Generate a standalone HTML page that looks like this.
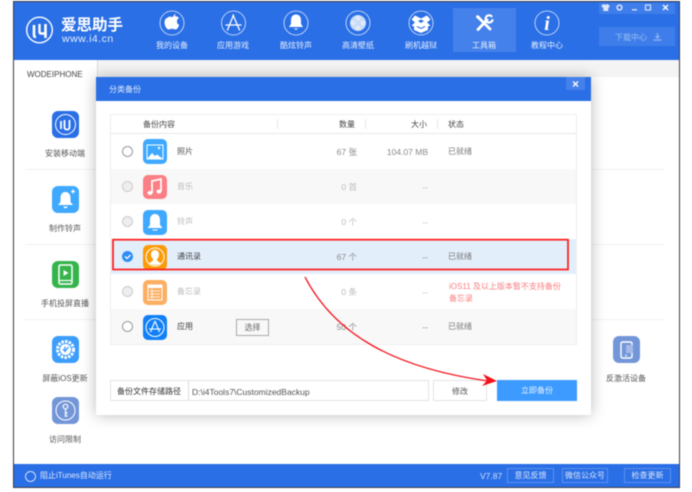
<!DOCTYPE html>
<html><head><meta charset="utf-8">
<style>
html,body{margin:0;padding:0;background:#fff}
body{width:692px;height:492px;overflow:hidden;position:relative;font-family:"Liberation Sans","Noto Sans CJK SC",sans-serif;filter:blur(.4px)}
.a{position:absolute;white-space:nowrap}
.t{position:absolute;white-space:nowrap;line-height:12px}
.c{text-align:center}
svg{position:absolute;overflow:visible}
</style></head><body>
<!-- window -->
<div class="a" style="left:13px;top:1px;width:665px;height:485px;background:#fff;border:1px solid #3c3c44"></div>
<div class="a" style="left:14px;top:2px;width:665px;height:58px;background:#2a6fe6"></div>
<div class="a" style="left:97px;top:60px;width:582px;height:17px;background:#f4f4f4"></div>
<div class="a" style="left:97px;top:60px;width:1px;height:20px;background:#ddd"></div>
<!-- logo -->
<svg style="left:0;top:0" width="692" height="60" viewBox="0 0 692 60" fill="none" stroke="#fff">
<circle cx="39.500" cy="30" r="12.800" stroke-width="1.400"/>
<path d="M34 25v10q0 2 2 2" stroke-width="2.600"/>
<path d="M39.500 24v8q0 1.500 1.500 1.500h5" stroke-width="2.400"/>
<path d="M45.500 24v14" stroke-width="2.600"/>
<g stroke-width=".8" opacity=".85">
<circle cx="172" cy="23" r="12"/><circle cx="233.500" cy="23" r="12"/><circle cx="296" cy="23" r="12"/><circle cx="358" cy="23" r="12"/><circle cx="421" cy="23" r="12"/><circle cx="484" cy="23" r="12"/><circle cx="547" cy="23" r="12"/>
</g>
</svg>
<div class="t" style="left:61px;top:17px;font-size:15.500px;line-height:17px;color:#fff;font-weight:bold">爱思助手</div>
<div class="t" style="left:62px;top:33px;font-size:10.500px;color:#e4eeff;letter-spacing:.5px">www.i4.cn</div>
<div class="a" style="left:453px;top:8px;width:63px;height:44px;background:#4581ea"></div>
<!-- nav icons -->
<svg style="left:0;top:0" width="692" height="60" viewBox="0 0 692 60">
<path d="M172 19q2-.6 3-.3-1.500-3 1-4-2.500.3-3.400 3-.3.8-.6 1.300zM168 18.500c-2.500 0-4 2.300-4 5 0 3.500 2.500 7 4 7 1 0 2-.7 3.500-.7s2.500.7 3.500.7c1.500 0 3-2.500 3.700-4.500-3-1.500-3-5.500-.2-7-1-1.400-2.500-1.800-3.700-1.800-1.300 0-2.500.8-3.300.8s-2-.5-3.500-.5z" fill="#fff" transform="translate(.5 -1)"/>
<g stroke="#fff" stroke-width="1.300" fill="none" stroke-linecap="round"><path d="M233.500 15l-6 15M233 15l6.500 15M226 25h15"/></g>
<path d="M296 14.500c-3.500 0-5 2.700-5 5.500v4l-2 3h14l-2-3v-4c0-2.800-1.500-5.500-5-5.500zM294 28.500a2.200 2 0 0 0 4 0z" fill="#fff"/>
<g fill="#fff" opacity=".75"><circle cx="358" cy="23" r="8"/></g>
<g fill="#dfe9fb"><circle cx="358" cy="18" r="2.500"/><circle cx="358" cy="28" r="2.500"/><circle cx="353" cy="23" r="2.500"/><circle cx="363" cy="23" r="2.500"/></g>
<path d="M415 15.500l6 3 6-3 3.500 4-3.500 3 3.500 3-2.500 1v3.500l-7 3-7-3v-3.500l-2.500-1 3.500-3-3.500-3z" fill="#fff"/><path d="M418 21l3-1.500 3 1.500-3 2z" fill="#2a6fe6"/><path d="M417 26.500l4 2 4-2" stroke="#2a6fe6" fill="none"/>
<!-- tools: screwdriver + wrench -->
<g fill="none" stroke="#fff" stroke-linecap="round">
<path d="M478.500 17.500l11.500 11.500" stroke-width="2.800"/>
<path d="M478 29.500l9-9.500" stroke-width="2.800"/>
<path d="M491.500 16.200a3.600 3.600 0 1 0 1 4" stroke-width="2.200"/>
</g>
<path d="M476.500 15l3 1 .5 2.500-1.500 1-2.500-2z" fill="#fff"/>
<text x="547" y="30" font-family="Liberation Serif" font-style="italic" font-weight="bold" font-size="20" fill="#fff" text-anchor="middle">i</text>
<!-- controls -->
<rect x="599" y="3" width="76" height="11" fill="#3f7eea"/>
<rect x="599" y="27" width="76" height="19" fill="#3f7eea"/>
<path d="M602 5l2-1 1 .8h1l1-.8 2 1 .8 2-1.500 .5V11h-5V7.500L601.500 7z" fill="#dce7fb"/>
<circle cx="619.500" cy="7.500" r="2.400" fill="none" stroke="#dce7fb" stroke-width="1.500"/>
<path d="M632 9.800h5" stroke="#dce7fb" stroke-width="1.300"/>
<rect x="645.500" y="5" width="5" height="5" fill="none" stroke="#dce7fb" stroke-width="1.100"/>
<path d="M663 5l5 5M668 5l-5 5" stroke="#fff" stroke-width="1.300"/>
<path d="M657.500 33v4M655.500 36l2 2 2-2M653.500 40h8" stroke="#8fb4f2" stroke-width="1.200" fill="none"/>
</svg>
<div class="t c" style="left:150px;top:40px;width:44px;font-size:8px;color:#e6eefc">我的设备</div>
<div class="t c" style="left:211px;top:40px;width:44px;font-size:8px;color:#e6eefc">应用游戏</div>
<div class="t c" style="left:274px;top:40px;width:44px;font-size:8px;color:#e6eefc">酷炫铃声</div>
<div class="t c" style="left:336px;top:40px;width:44px;font-size:8px;color:#e6eefc">高清壁纸</div>
<div class="t c" style="left:399px;top:40px;width:44px;font-size:8px;color:#e6eefc">刷机越狱</div>
<div class="t c" style="left:462px;top:40px;width:44px;font-size:8px;color:#e6eefc">工具箱</div>
<div class="t c" style="left:525px;top:40px;width:44px;font-size:8px;color:#e6eefc">教程中心</div>
<div class="t" style="left:615px;top:32px;font-size:8px;color:#9dbdf3">下载中心</div>

<!-- sidebar -->
<div class="t" style="left:27px;top:69px;font-size:8px;color:#444">WODEIPHONE</div>
<div class="a" style="left:25px;top:169px;width:640px;height:1px;background:#f2f2f2"></div>
<div class="a" style="left:25px;top:244px;width:640px;height:1px;background:#f2f2f2"></div>
<div class="a" style="left:25px;top:319px;width:640px;height:1px;background:#f2f2f2"></div>

<svg style="left:0;top:0" width="692" height="492" viewBox="0 0 692 492">
<rect x="52" y="111" width="27" height="27" rx="6" fill="#2a6fe6"/>
<circle cx="65.500" cy="124.500" r="10" fill="none" stroke="#fff" stroke-width="1"/>
<path d="M61 121v8M64.500 120v7q0 2.500 2 2.500h1q2 0 2-2.500v-7" fill="none" stroke="#fff" stroke-width="1.800"/>
<rect x="52" y="186" width="27" height="27" rx="6" fill="#3ea9ff"/>
<path d="M65.500 192c-3.500 0-5 3-5 6v4l-2.500 3h15l-2.500-3v-4c0-3-1.500-6-5-6zM63.500 206.500a2 1.800 0 0 0 4 0z" fill="#fff"/>
<path d="M71 191.500h4M73 189.500v4" stroke="#fff" stroke-width="1.200"/>
<rect x="52" y="261" width="27" height="27" rx="6" fill="#36b44c"/>
<rect x="59" y="265" width="13" height="19" rx="1.500" fill="none" stroke="#fff" stroke-width="1.500"/>
<path d="M59 280.500h13" stroke="#fff" stroke-width="1.200"/><path d="M63.500 270v6l5-3z" fill="#fff"/>
<rect x="52" y="336" width="27" height="27" rx="6" fill="#3c9dfb"/>
<circle cx="65.500" cy="349.500" r="8" fill="none" stroke="#fff" stroke-width="3" stroke-dasharray="2.500 1.200"/>
<circle cx="65.500" cy="349.500" r="5.500" fill="#fff"/>
<path d="M63 349l2 2.500 3.500-4.500M65 351.500v-5" stroke="#3c9dfb" stroke-width="1.300" fill="none"/>
<rect x="52" y="397" width="27" height="27" rx="6" fill="#7396d8"/>
<circle cx="65.500" cy="410.500" r="9.500" fill="none" stroke="#fff" stroke-width="1"/>
<circle cx="65.500" cy="406.500" r="2.300" fill="none" stroke="#fff" stroke-width="1.200"/>
<path d="M65.500 409v8M65.500 413h2M65.500 416h2" stroke="#fff" stroke-width="1.200"/>
<rect x="613" y="336" width="27" height="27" rx="6" fill="#7396d8"/>
<rect x="621" y="342" width="11" height="16" rx="1.500" fill="none" stroke="#fff" stroke-width="1.400"/>
<rect x="626" y="345" width="7" height="8" fill="#a3bae6"/>
<circle cx="626" cy="355.500" r=".9" fill="#fff"/>
</svg>
<div class="t c" style="left:35px;top:148px;width:60px;font-size:8px;color:#555">安装移动端</div>
<div class="t c" style="left:35px;top:223px;width:60px;font-size:8px;color:#555">制作铃声</div>
<div class="t c" style="left:30px;top:298px;width:70px;font-size:8px;color:#555">手机投屏直播</div>
<div class="t c" style="left:30px;top:373px;width:70px;font-size:8px;color:#555">屏蔽iOS更新</div>
<div class="t c" style="left:35px;top:434px;width:60px;font-size:8px;color:#555">访问限制</div>
<div class="t c" style="left:596px;top:373px;width:60px;font-size:8px;color:#555">反激活设备</div>

<!-- status bar -->
<div class="a" style="left:14px;top:464px;width:665px;height:23px;background:#2a6fe6"></div>
<div class="a" style="left:25px;top:471px;width:9px;height:9px;border:1px solid #cfe0fb;border-radius:50%"></div>
<div class="t" style="left:40px;top:470px;font-size:8px;color:#dfe9fb">阻止iTunes自动运行</div>
<div class="t" style="left:480px;top:470px;font-size:8.500px;color:#cfdffa">V7.87</div>
<div class="t c" style="left:507px;top:468px;width:45px;height:13px;line-height:14px;border:1px solid #5c92ee;font-size:8px;color:#dfe9fb">意见反馈</div>
<div class="t c" style="left:562px;top:468px;width:44px;height:13px;line-height:14px;border:1px solid #5c92ee;font-size:8px;color:#dfe9fb">微信公众号</div>
<div class="t c" style="left:624px;top:468px;width:45px;height:13px;line-height:14px;border:1px solid #5c92ee;font-size:8px;color:#dfe9fb">检查更新</div>

<!-- dialog -->
<div class="a" style="left:96px;top:77px;width:495px;height:338px;background:#fff;box-shadow:0 0 14px rgba(0,0,0,.28)"></div>
<div class="a" style="left:96px;top:77px;width:495px;height:24px;background:#2a6fe6"></div>
<div class="t" style="left:109px;top:84px;font-size:8px;color:#e6eefc">分类备份</div>
<div class="a" style="left:566px;top:77px;width:19px;height:13px;background:#4581ea"></div>
<svg style="left:0;top:0" width="692" height="492" viewBox="0 0 692 492"><path d="M573 81.500l5 5M578 81.500l-5 5" stroke="#fff" stroke-width="1.300"/></svg>

<!-- table -->
<div class="a" style="left:110px;top:114px;width:467px;height:231px;border:1px solid #eee;box-sizing:border-box"></div>
<div class="a" style="left:111px;top:133px;width:465px;height:1px;background:#e8e8e8"></div>
<div class="a" style="left:111px;top:169px;width:465px;height:35px;background:#f8f8f8"></div>
<div class="a" style="left:111px;top:239px;width:465px;height:35px;background:#e3eefb"></div>
<div class="a" style="left:111px;top:309px;width:465px;height:35px;background:#f8f8f8"></div>
<div class="a" style="left:277px;top:119px;width:1px;height:10px;background:#e5e5e5"></div>
<div class="a" style="left:365px;top:119px;width:1px;height:10px;background:#e5e5e5"></div>
<div class="a" style="left:437px;top:119px;width:1px;height:10px;background:#e5e5e5"></div>
<div class="t" style="left:143px;top:119px;font-size:8px;color:#444">备份内容</div>
<div class="t" style="left:339px;top:119px;font-size:8px;color:#444">数量</div>
<div class="t" style="left:411px;top:119px;font-size:8px;color:#444">大小</div>
<div class="t" style="left:448px;top:119px;font-size:8px;color:#444">状态</div>

<!-- radios -->
<div class="a" style="left:122px;top:146px;width:9px;height:9px;border:1px solid #999;border-radius:50%;background:#fff"></div>
<div class="a" style="left:122px;top:181px;width:9px;height:9px;border:1px solid #ccc;border-radius:50%;background:#eee"></div>
<div class="a" style="left:122px;top:216px;width:9px;height:9px;border:1px solid #ccc;border-radius:50%;background:#eee"></div>
<div class="a" style="left:122px;top:251px;width:11px;height:11px;border-radius:50%;background:#2d8df5"></div>
<div class="a" style="left:122px;top:286px;width:9px;height:9px;border:1px solid #ccc;border-radius:50%;background:#eee"></div>
<div class="a" style="left:122px;top:321px;width:9px;height:9px;border:1px solid #999;border-radius:50%;background:#fff"></div>

<!-- row icons -->
<svg style="left:0;top:0" width="692" height="492" viewBox="0 0 692 492">
<path d="M125 256.500l2 2 3.500-3.500" stroke="#fff" stroke-width="1.300" fill="none"/>
<rect x="143" y="139" width="24" height="25" rx="5" fill="#3ea9ff"/>
<rect x="147" y="145" width="16" height="14" fill="none" stroke="#fff" stroke-width="1"/>
<path d="M147 159l5-6 3 3 2-1.500 6 4.500z" fill="#fff"/><circle cx="159" cy="148" r="1.200" fill="#fff"/>
<rect x="143" y="175" width="24" height="24" rx="5" fill="#fb7f85"/>
<path d="M152 193v-12l9-2v12" fill="none" stroke="#fff" stroke-width="1.700"/>
<ellipse cx="150" cy="193" rx="2.500" ry="2" fill="#fff"/><ellipse cx="159" cy="191.500" rx="2.500" ry="2" fill="#fff"/>
<rect x="143" y="210" width="24" height="25" rx="5" fill="#3ea9ff"/>
<path d="M155 214c-3.500 0-5 3-5 6v5l-2.500 3h15l-2.500-3v-5c0-3-1.500-6-5-6z" fill="#fff"/><path d="M152.500 230h5" stroke="#fff" stroke-width="1"/>
<rect x="143" y="245" width="24" height="25" rx="5" fill="#fb9b08"/>
<circle cx="155" cy="257" r="9" fill="none" stroke="#fff" stroke-width="1"/>
<path d="M155 250c-2.500 0-4 2-4 4.500 0 2 1 3.500 2 4.500v1.500l-4 3q6 3 12 0l-4-3V259c1-1 2-2.500 2-4.500 0-2.500-1.500-4.500-4-4.500z" fill="#fff"/>
<rect x="143" y="280" width="24" height="25" rx="5" fill="#fcae62"/>
<rect x="148" y="285" width="14" height="15" fill="none" stroke="#fff" stroke-width="1"/>
<rect x="148" y="285" width="14" height="3" fill="#fff"/>
<path d="M150 291h10M150 294h10M150 297h10M152 289v10" stroke="#fff" stroke-width=".8"/>
<rect x="143" y="315" width="24" height="25" rx="5" fill="#1180f7"/>
<circle cx="155" cy="327.500" r="9" fill="none" stroke="#fff" stroke-width="1"/>
<path d="M155 321l-4.500 11M155 321l4.500 11M149 329h12" fill="none" stroke="#fff" stroke-width="1.100"/>
</svg>

<!-- row text -->
<div class="t" style="left:177px;top:146px;font-size:8px;color:#555">照片</div>
<div class="t" style="left:177px;top:181px;font-size:8px;color:#bbb">音乐</div>
<div class="t" style="left:177px;top:216px;font-size:8px;color:#bbb">铃声</div>
<div class="t" style="left:177px;top:251px;font-size:8px;color:#444">通讯录</div>
<div class="t" style="left:177px;top:286px;font-size:8px;color:#bbb">备忘录</div>
<div class="t" style="left:177px;top:321px;font-size:8px;color:#444">应用</div>
<div class="t c" style="left:236px;top:319px;width:31px;height:15px;line-height:16px;border:1px solid #aaa;font-size:8px;color:#666">选择</div>

<div class="t" style="right:335px;top:146px;font-size:8.500px;color:#888">67 张</div>
<div class="t" style="right:335px;top:181px;font-size:8.500px;color:#bbb">0 首</div>
<div class="t" style="right:335px;top:216px;font-size:8.500px;color:#bbb">0 个</div>
<div class="t" style="right:335px;top:251px;font-size:8.500px;color:#888">67 个</div>
<div class="t" style="right:335px;top:286px;font-size:8.500px;color:#bbb">0 条</div>
<div class="t" style="right:335px;top:321px;font-size:8.500px;color:#888">50 个</div>

<div class="t" style="right:264px;top:146px;font-size:8.500px;color:#888">104.07 MB</div>
<div class="t" style="right:264px;top:181px;font-size:8.500px;color:#bbb">--</div>
<div class="t" style="right:264px;top:216px;font-size:8.500px;color:#bbb">--</div>
<div class="t" style="right:264px;top:251px;font-size:8.500px;color:#888">--</div>
<div class="t" style="right:264px;top:286px;font-size:8.500px;color:#bbb">--</div>
<div class="t" style="right:264px;top:321px;font-size:8.500px;color:#888">--</div>

<div class="t" style="left:448px;top:146px;font-size:8px;color:#777">已就绪</div>
<div class="t" style="left:448px;top:251px;font-size:8px;color:#777">已就绪</div>
<div class="t" style="left:448px;top:321px;font-size:8px;color:#777">已就绪</div>
<div class="t" style="left:449px;top:281px;font-size:8px;color:#f87c80">iOS11 及以上版本暂不支持备份</div>
<div class="t" style="left:449px;top:293px;font-size:8px;color:#f87c80">备忘录</div>

<!-- path row -->
<div class="a" style="left:110px;top:380px;width:319px;height:21px;border:1px solid #e4e4e4;box-sizing:border-box"></div>
<div class="a" style="left:188px;top:380px;width:1px;height:21px;background:#ddd"></div>
<div class="t" style="left:117px;top:386px;font-size:8px;color:#333">备份文件存储路径</div>
<div class="t" style="left:192px;top:386px;font-size:8.500px;color:#555">D:\i4Tools7\CustomizedBackup</div>
<div class="t c" style="left:433px;top:380px;width:54px;height:21px;line-height:22px;border:1px solid #e4e4e4;box-sizing:border-box;font-size:8px;color:#555">修改</div>
<div class="t c" style="left:497px;top:380px;width:80px;height:21px;line-height:22px;background:#3d9bff;font-size:8px;color:#e8f3ff">立即备份</div>

<!-- red annotation -->
<svg style="left:0;top:0" width="692" height="492" viewBox="0 0 692 492">
<rect x="113" y="239.700" width="455" height="29.800" fill="none" stroke="#ff1a1a" stroke-width="1.700"/>
<path d="M305 277C335 335 395 368 488 381" fill="none" stroke="#f5101a" stroke-width="1.300"/>
<path d="M483 374l14 7-15 5 5-5.500z" fill="#f5101a"/>
</svg>
</body></html>
